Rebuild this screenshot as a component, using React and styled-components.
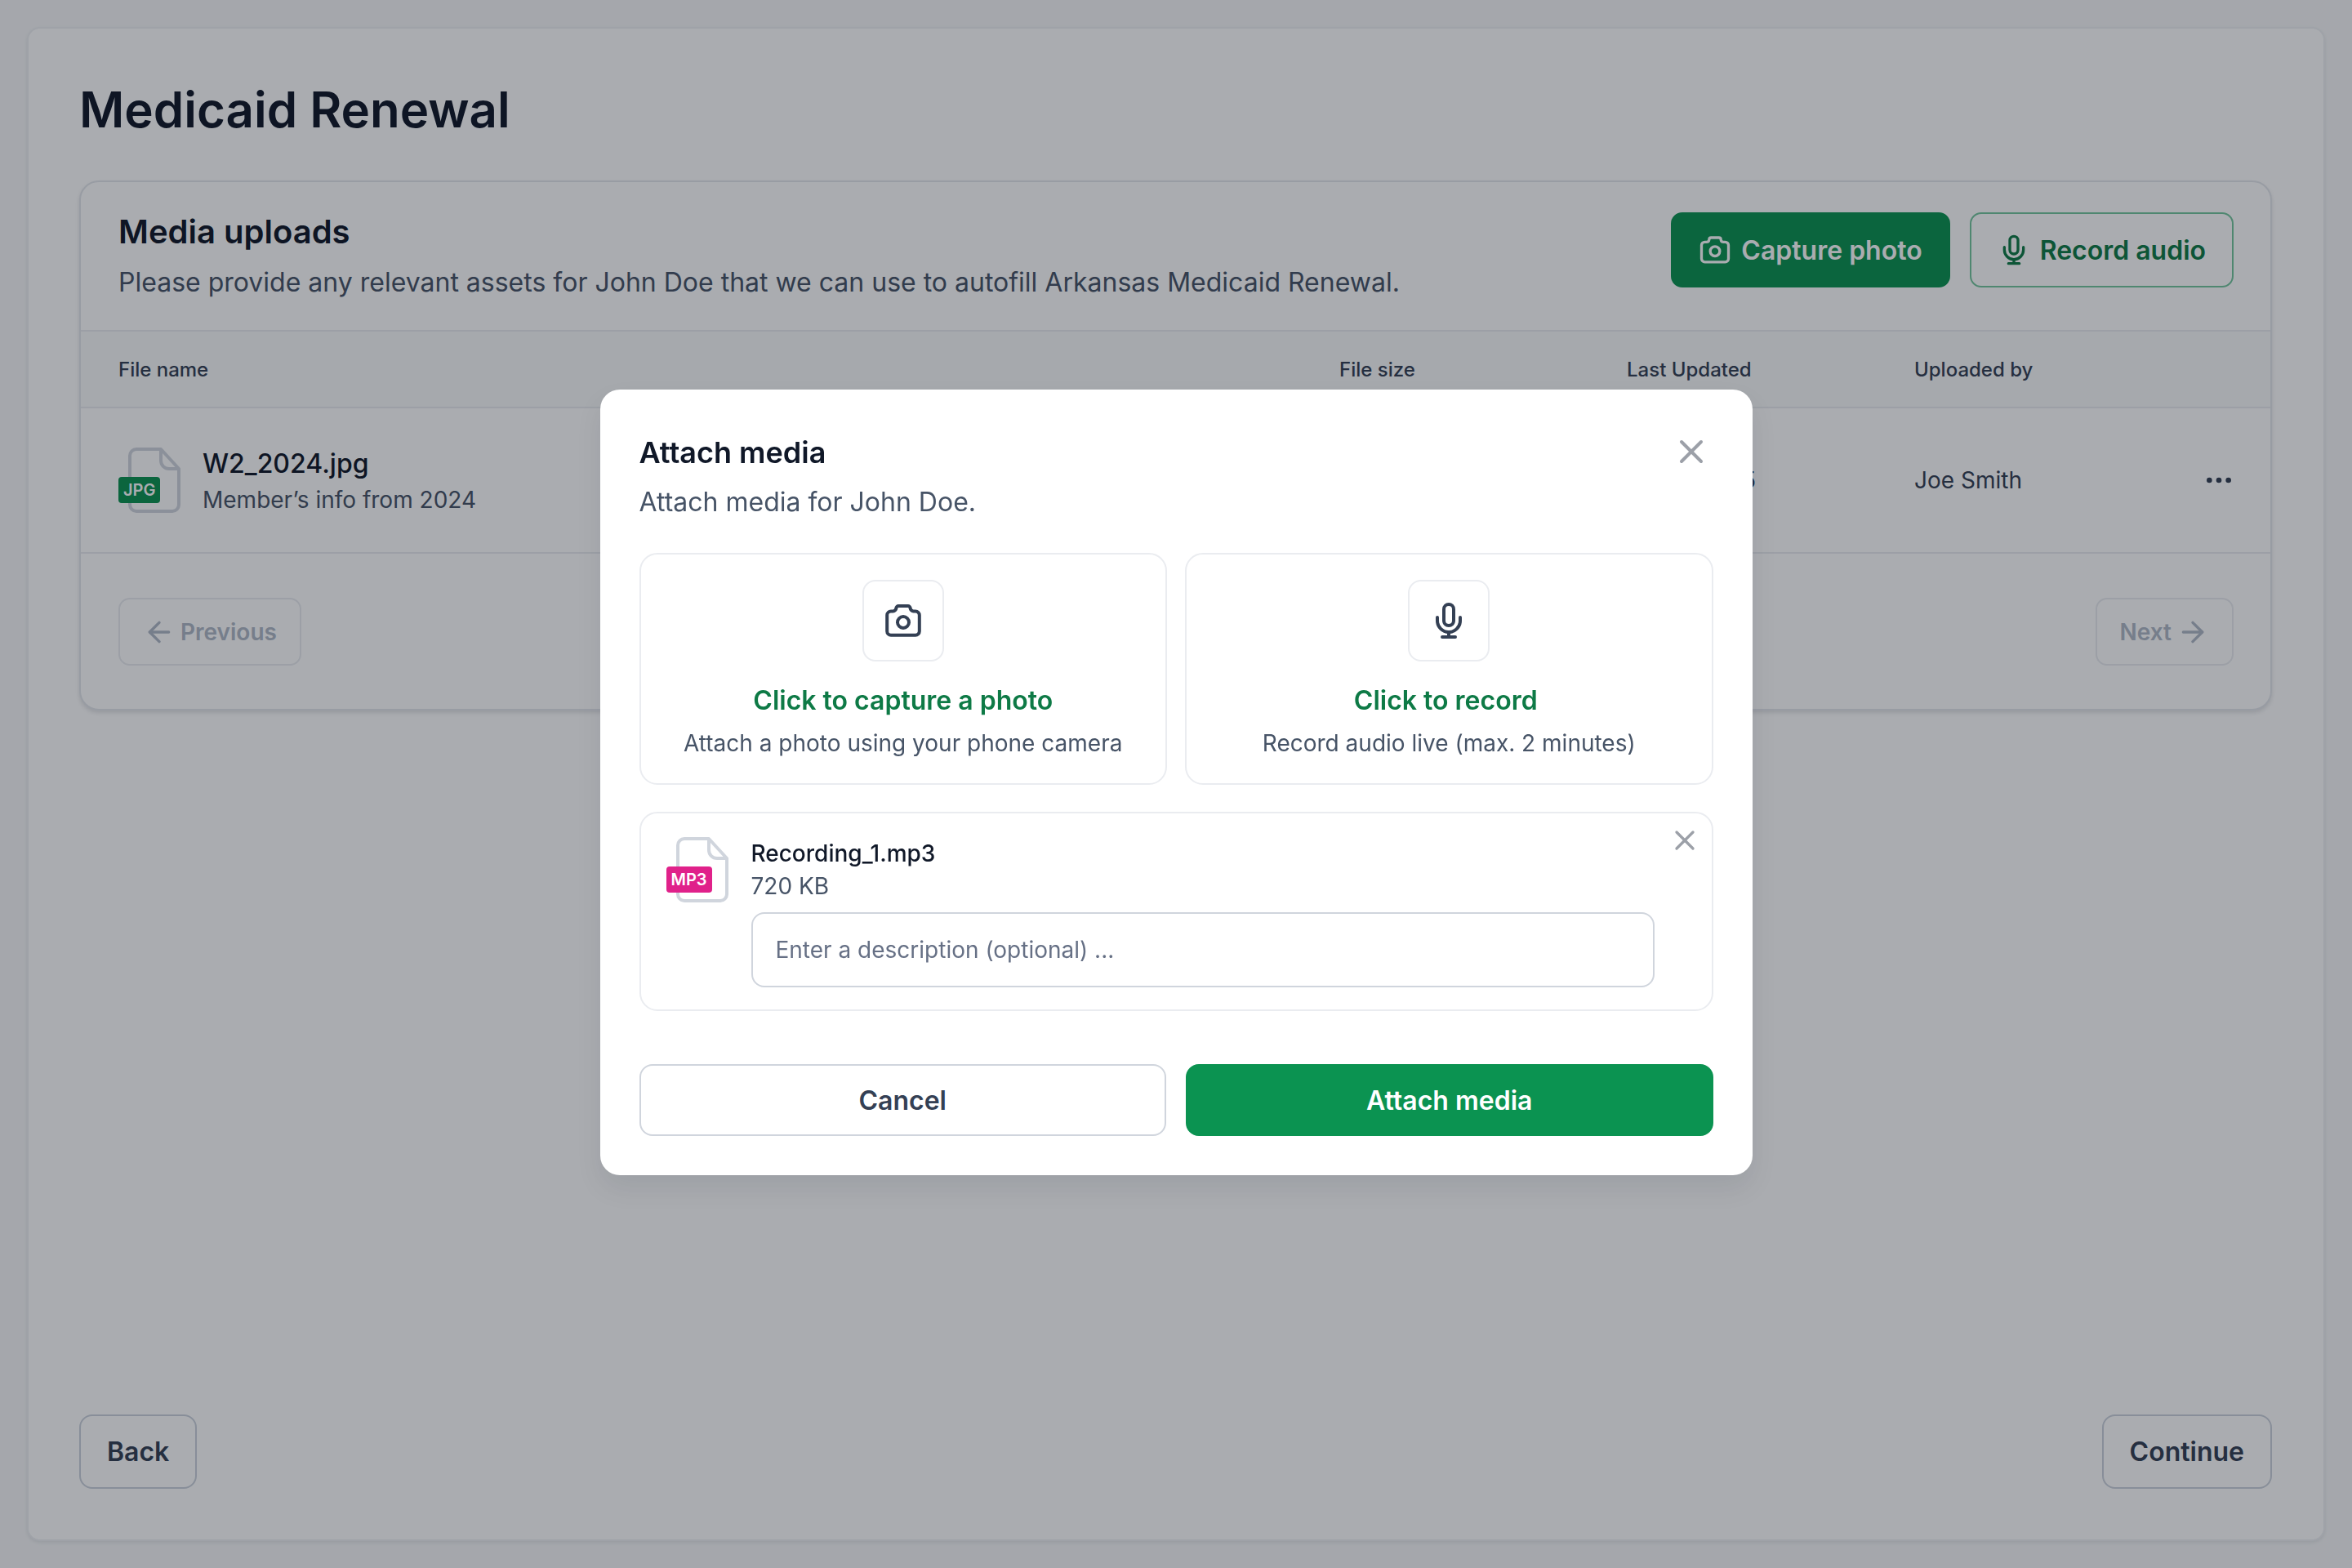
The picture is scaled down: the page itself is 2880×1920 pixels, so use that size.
import React from "react";
import styled, { createGlobalStyle } from "styled-components";
import { ArrowLeft, ArrowRight, Ellipsis, X } from "lucide-react";

const GlobalStyle = createGlobalStyle`
  * {
    box-sizing: border-box;
  }
  html, body {
    margin: 0;
    padding: 0;
  }
  body {
    width: 2880px;
    height: 1920px;
    overflow: hidden;
    background: #f7f8f9;
    font-family: Inter, "Liberation Sans", sans-serif;
    color: #101828;
  }
`;

const Page = styled.div`
  width: 2880px;
  height: 1920px;
  padding: 33px;
`;

const Shell = styled.div`
  display: flex;
  flex-direction: column;
  height: 100%;
  padding: 63px 63px 62px 62px;
  background: #ffffff;
  border: 2px solid #eef0f3;
  border-radius: 16px;
  box-shadow: 0 2px 4px rgba(16, 24, 40, 0.08);
`;

const PageTitle = styled.h1`
  margin: 0 0 51px;
  font-size: 60px;
  line-height: 72px;
  font-weight: 600;
  color: #101828;
`;

const Card = styled.section`
  border: 2px solid #e4e7ec;
  border-radius: 24px;
  background: #ffffff;
  box-shadow: 0 3px 5px rgba(16, 24, 40, 0.12);
`;

const CardHeader = styled.div`
  display: flex;
  align-items: flex-start;
  justify-content: space-between;
  height: 183px;
  padding: 37px 45px 0 46px;
  border-bottom: 2px solid #eaecf0;
`;

const CardTitle = styled.h2`
  margin: 0 0 14px;
  font-size: 40px;
  line-height: 48px;
  font-weight: 600;
  color: #101828;
`;

const CardText = styled.p`
  margin: 0;
  font-size: 32px;
  line-height: 48px;
  color: #475467;
`;

const HeaderActions = styled.div`
  display: flex;
  gap: 24px;
`;

const ActionButton = styled.button`
  display: flex;
  align-items: center;
  gap: 12px;
  height: 92px;
  padding: 0 32px;
  border-radius: 14px;
  border: 2px solid ${({ $solid }) => ($solid ? "#0b9351" : "#74c69d")};
  background: ${({ $solid }) => ($solid ? "#0b9351" : "#ffffff")};
  color: ${({ $solid }) => ($solid ? "#ffffff" : "#0e7a46")};
  font: 600 32px Inter, sans-serif;
`;

const TableGrid = styled.div`
  display: grid;
  grid-template-columns: 1495px 352px 352px 1fr;
  align-items: center;
  padding: 0 45px 0 46px;
`;

const TableHead = styled(TableGrid)`
  height: 94px;
  background: #f9fafb;
  border-bottom: 2px solid #eaecf0;
  font-size: 24px;
  font-weight: 500;
  color: #344054;
`;

const TableRow = styled(TableGrid)`
  height: 178px;
  border-bottom: 2px solid #eaecf0;
  font-size: 28px;
  color: #344054;
`;

const RowFile = styled.div`
  display: flex;
  align-items: center;
  gap: 27px;
`;

const RowFileText = styled.div`
  margin-top: 3px;
`;

const Thumb = styled.div`
  position: relative;
  flex: none;
  width: 76px;
  height: 80px;
  padding-left: 12px;
`;

const Badge = styled.span`
  position: absolute;
  left: 0;
  top: 36px;
  display: flex;
  align-items: center;
  justify-content: center;
  height: 32px;
  padding: 0 6px;
  border-radius: 4px;
  background: ${({ $color }) => $color};
  color: #ffffff;
  font-size: 20px;
  font-weight: 600;
`;

const FileName = styled.div`
  font-size: 32px;
  line-height: 44px;
  font-weight: 500;
  color: #101828;
`;

const FileNote = styled.div`
  font-size: 28px;
  line-height: 44px;
  color: #475467;
`;

const UploaderCell = styled.div`
  display: flex;
  align-items: center;
  justify-content: space-between;
`;

const MoreButton = styled.span`
  display: flex;
  margin-right: -2px;
  color: #344054;
`;

const Pager = styled.div`
  display: flex;
  justify-content: space-between;
  padding: 54px 45px 53px 46px;
`;

const PagerButton = styled.button`
  display: flex;
  align-items: center;
  gap: 6px;
  height: 83px;
  padding: 0 28px;
  border: 2px solid #eaecf0;
  border-radius: 14px;
  background: #ffffff;
  color: #b0b8c6;
  font: 600 28px Inter, sans-serif;
`;

const Footer = styled.div`
  display: flex;
  justify-content: space-between;
  margin-top: auto;
`;

const FooterButton = styled.button`
  height: 91px;
  padding: 0 32px;
  border: 2px solid #cbd2dc;
  border-radius: 16px;
  background: #ffffff;
  color: #344054;
  font: 600 32px Inter, sans-serif;
`;

const Overlay = styled.div`
  position: fixed;
  inset: 0;
  display: flex;
  align-items: center;
  justify-content: center;
  padding-bottom: 4px;
  background: rgba(12, 16, 28, 0.35);
`;

const Modal = styled.div`
  position: relative;
  width: 1411px;
  padding: 52px 48px 48px;
  border-radius: 24px;
  background: #ffffff;
  box-shadow: 0 16px 32px rgba(16, 24, 40, 0.08);
`;

const ModalTitle = styled.h3`
  margin: 0 0 12px;
  font-size: 36px;
  line-height: 50px;
  font-weight: 600;
  color: #101828;
`;

const ModalText = styled.p`
  margin: 0 0 38px;
  font-size: 32px;
  line-height: 48px;
  color: #475467;
`;

const CloseButton = styled.span`
  position: absolute;
  display: flex;
  top: ${({ $top }) => $top}px;
  right: ${({ $right }) => $right}px;
  color: #9ca0a8;
`;

const OptionGrid = styled.div`
  display: grid;
  grid-template-columns: 1fr 1fr;
  gap: 22px;
  margin-bottom: 33px;
`;

const Option = styled.div`
  display: flex;
  flex-direction: column;
  align-items: center;
  height: 284px;
  padding-top: 31px;
  border: 2px solid #eaecf0;
  border-radius: 22px;
`;

const OptionIcon = styled.div`
  display: flex;
  align-items: center;
  justify-content: center;
  width: 100px;
  height: 100px;
  margin-bottom: 26px;
  border: 2px solid #eaecf0;
  border-radius: 16px;
  color: #344054;
`;

const OptionTitle = styled.div`
  font-size: 32px;
  line-height: 44px;
  font-weight: 600;
  color: #0e7a46;
`;

const OptionText = styled.div`
  margin-top: 8px;
  font-size: 28px;
  line-height: 44px;
  color: #475467;
`;

const FileCard = styled.div`
  display: flex;
  gap: 28px;
  height: 244px;
  margin-bottom: 65px;
  padding: 29px 70px 0 31px;
  border: 2px solid #eaecf0;
  border-radius: 22px;
`;

const FileBody = styled.div`
  flex: 1;
`;

const RecordingName = styled.div`
  font-size: 28px;
  line-height: 40px;
  font-weight: 500;
  color: #101828;
`;

const RecordingSize = styled.div`
  margin-bottom: 12px;
  font-size: 28px;
  line-height: 40px;
  color: #475467;
`;

const DescriptionInput = styled.input`
  display: block;
  width: 100%;
  height: 92px;
  padding: 0 28px;
  border: 2px solid #d0d5dd;
  border-radius: 16px;
  background: #ffffff;
  font: 400 28px Inter, sans-serif;
  color: #101828;
  &::placeholder {
    color: #667085;
    opacity: 1;
  }
`;

const ModalActions = styled.div`
  display: grid;
  grid-template-columns: 1fr 1fr;
  gap: 24px;
`;

const ModalButton = styled.button`
  height: 88px;
  border: 2px solid ${({ $primary }) => ($primary ? "#0b9351" : "#d0d5dd")};
  border-radius: 16px;
  background: ${({ $primary }) => ($primary ? "#0b9351" : "#ffffff")};
  color: ${({ $primary }) => ($primary ? "#ffffff" : "#344054")};
  font: 600 32px Inter, sans-serif;
`;

const CameraIcon = ({ size }) => (
  <svg width={size} height={size} viewBox="0 0 24 24" fill="none" stroke="currentColor" strokeWidth="2" strokeLinecap="round" strokeLinejoin="round">
    <path d="M4.500 6.200h1.200a2 2 0 0 0 2-1.800 1.400 1.400 0 0 1 1.400-1.400h5.800a1.400 1.400 0 0 1 1.400 1.400 2 2 0 0 0 2 1.800h1.200a2.400 2.400 0 0 1 2.400 2.400v9.900a2.400 2.400 0 0 1-2.400 2.400h-15a2.400 2.400 0 0 1-2.400-2.400V8.600a2.400 2.400 0 0 1 2.400-2.400z" />
    <circle cx="12" cy="13" r="3.500" />
  </svg>
);

const MicIcon = ({ size }) => (
  <svg width={size} height={size} viewBox="0 0 24 24" fill="none" stroke="currentColor" strokeWidth="2" strokeLinecap="round" strokeLinejoin="round">
    <rect x="9" y="2" width="6" height="13" rx="3" />
    <path d="M19 10v2a7 7 0 0 1-14 0v-2" />
    <path d="M12 19v3M8 22h8" />
  </svg>
);

const DocIcon = () => (
  <svg width="64" height="80" viewBox="0 0 64 80" fill="none" stroke="#d0d5dd" strokeWidth="4" strokeLinejoin="round">
    <path d="M10 2h30l22 24v44a8 8 0 0 1-8 8H10a8 8 0 0 1-8-8V10a8 8 0 0 1 8-8z" fill="#ffffff" />
    <path d="M40 2v14a10 10 0 0 0 10 10h12" />
  </svg>
);

const App = () => {
  return (
    <>
      <GlobalStyle />
      <Page>
        <Shell>
          <PageTitle>Medicaid Renewal</PageTitle>
          <Card>
            <CardHeader>
              <div>
                <CardTitle>Media uploads</CardTitle>
                <CardText>Please provide any relevant assets for John Doe that we can use to autofill Arkansas Medicaid Renewal.</CardText>
              </div>
              <HeaderActions>
                <ActionButton $solid>
                  <CameraIcon size={40} />
                  Capture photo
                </ActionButton>
                <ActionButton>
                  <MicIcon size={40} />
                  Record audio
                </ActionButton>
              </HeaderActions>
            </CardHeader>
            <TableHead>
              <div>File name</div>
              <div>File size</div>
              <div>Last Updated</div>
              <div>Uploaded by</div>
            </TableHead>
            <TableRow>
              <RowFile>
                <Thumb>
                  <DocIcon />
                  <Badge $color="#0b9351">JPG</Badge>
                </Thumb>
                <RowFileText>
                  <FileName>W2_2024.jpg</FileName>
                  <FileNote>Member’s info from 2024</FileNote>
                </RowFileText>
              </RowFile>
              <div>1.2 MB</div>
              <div>Jan 4, 2025</div>
              <UploaderCell>
                Joe Smith
                <MoreButton>
                  <Ellipsis size={40} />
                </MoreButton>
              </UploaderCell>
            </TableRow>
            <Pager>
              <PagerButton>
                <ArrowLeft size={40} />
                Previous
              </PagerButton>
              <PagerButton>
                Next
                <ArrowRight size={40} />
              </PagerButton>
            </Pager>
          </Card>
          <Footer>
            <FooterButton>Back</FooterButton>
            <FooterButton>Continue</FooterButton>
          </Footer>
        </Shell>
      </Page>
      <Overlay>
        <Modal>
          <CloseButton $top={52} $right={51}>
            <X size={48} />
          </CloseButton>
          <ModalTitle>Attach media</ModalTitle>
          <ModalText>Attach media for John Doe.</ModalText>
          <OptionGrid>
            <Option>
              <OptionIcon>
                <CameraIcon size={48} />
              </OptionIcon>
              <OptionTitle>Click to capture a photo</OptionTitle>
              <OptionText>Attach a photo using your phone camera</OptionText>
            </Option>
            <Option>
              <OptionIcon>
                <MicIcon size={48} />
              </OptionIcon>
              <OptionTitle>Click to record&nbsp;</OptionTitle>
              <OptionText>Record audio live (max. 2 minutes)</OptionText>
            </Option>
          </OptionGrid>
          <FileCard>
            <Thumb>
              <DocIcon />
              <Badge $color="#e0218a">MP3</Badge>
            </Thumb>
            <FileBody>
              <RecordingName>Recording_1.mp3</RecordingName>
              <RecordingSize>720 KB</RecordingSize>
              <DescriptionInput placeholder="Enter a description (optional) ..." />
            </FileBody>
          </FileCard>
          <CloseButton $top={532} $right={63}>
            <X size={40} />
          </CloseButton>
          <ModalActions>
            <ModalButton>Cancel</ModalButton>
            <ModalButton $primary>Attach media</ModalButton>
          </ModalActions>
        </Modal>
      </Overlay>
    </>
  );
};

export default App;
